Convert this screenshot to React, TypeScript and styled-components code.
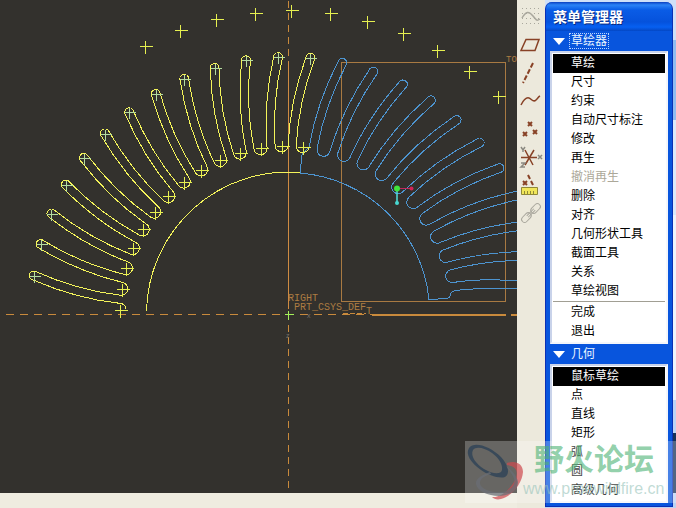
import React from "react";
import styled, { createGlobalStyle } from "styled-components";

const GlobalStyle = createGlobalStyle`
  *, *::before, *::after { box-sizing: border-box; }
  html, body, #root { margin: 0; height: 100%; }
  body {
    overflow: hidden;
    background: #ece9d8;
    font: 12px/19px "Liberation Sans", "Noto Sans CJK SC", sans-serif;
  }
`;

/* ---------- Page layout ---------- */

const Desktop = styled.div`
  position: relative;
  display: flex;
  height: 100vh;
  overflow: hidden;
  background: #ece9d8;
`;

const Workspace = styled.div`
  flex: 1;
  min-width: 0;
  display: flex;
  flex-direction: column;
`;

const Viewport = styled.main`
  flex: 1;
  min-height: 0;
  background: #33312d;
`;

const StatusBar = styled.footer`
  height: 15px;
  background: #efece0;
`;

const Drawing = styled.svg`
  display: block;
  width: 100%;
  height: 100%;
  overflow: hidden;
`;

const Toolbar = styled.nav`
  display: flex;
  flex-direction: column;
  width: 28px;
  padding-top: 2px;
  background: #ece9dc;
`;

const ToolButton = styled.button`
  display: block;
  width: 28px;
  height: 28px;
  padding: 0;
  border: 0;
  background: none;
`;

const Backdrop = styled.div`
  display: flex;
  flex-direction: column;
  padding-right: 3px;
  background: linear-gradient(
    #cfe0f8 0 40px,
    #8fbcf2 40px 120px,
    #dce9fb 120px 215px,
    #eef4fd 215px 400px,
    #bcd4f6 400px 433px,
    #173158 433px 493px,
    #bdd2f3 493px
  );
`;

/* ---------- Menu manager window ---------- */

const MenuWindow = styled.aside`
  display: flex;
  flex-direction: column;
  width: 128px;
  margin: 2px 0;
  padding: 0 4px 3px;
  border: solid #0b2fb5;
  border-width: 0 1px 1px;
  border-radius: 7px 7px 0 0;
  background: #0855dd;
`;

const TitleBar = styled.h1`
  height: 29px;
  margin: 0 -4px;
  padding-left: 7px;
  border-radius: 7px 7px 0 0;
  background: linear-gradient(#0a3fc0, #2b83f6 3px, #0a5ce6 8px, #0552dc 20px, #0660f2 25px, #0447c4);
  color: #fff;
  font-size: 14px;
  font-weight: 700;
  line-height: 30px;
  text-shadow: 1px 1px #0a2a80;
`;

const SectionHeader = styled.button`
  display: flex;
  align-items: center;
  gap: 4px;
  height: 20px;
  padding: 0 0 0 3px;
  border: 0;
  background: none;
  color: #eaf6ff;
  font: inherit;
`;

const SectionLabel = styled.span<{ $focused?: boolean }>`
  height: 16px;
  padding: 0 1px;
  border: 1px dotted ${(p) => (p.$focused ? "#b9d4ff" : "transparent")};
  line-height: 14px;
`;

const MenuList = styled.ul`
  margin: 0;
  padding: 1px;
  border: 2px solid #c9d3ea;
  border-right-color: #f4f6fb;
  border-bottom-color: #f4f6fb;
  background: #fff;
  list-style: none;
`;

const MenuItem = styled.button<{ $active?: boolean }>`
  display: block;
  width: 100%;
  height: 19px;
  padding: 0 0 0 18px;
  border: 0;
  background: ${(p) => (p.$active ? "#000" : "none")};
  color: ${(p) => (p.$active ? "#fff" : "#000")};
  font: inherit;
  text-align: left;
  white-space: nowrap;

  &:disabled { color: #aca899; }
`;

const Separator = styled.li`
  height: 2px;
  border-top: 1px solid #a19f94;
`;

/* ---------- Forum watermark ---------- */

const Watermark = styled.div`
  position: absolute;
  right: 0;
  bottom: 5px;
  display: flex;
  width: 211px;
  height: 62px;
  background: rgba(255, 255, 255, 0.26);
  pointer-events: none;
`;

const WatermarkText = styled.div`
  display: flex;
  flex-direction: column;
  margin-left: -2px;
  white-space: nowrap;
`;

const WatermarkName = styled.span`
  padding-left: 11px;
  color: rgba(76, 178, 116, 0.62);
  font-size: 30px;
  font-weight: 700;
  line-height: 38px;
`;

const WatermarkUrl = styled.span`
  color: rgba(150, 195, 185, 0.6);
  font-size: 16px;
  line-height: 20px;
`;

/* ---------- Sketch geometry ---------- */

const CX = 288;
const CY = 314;
const STEP = 7.2;
const TIP_R = 257;
const ROOT_R = 168;

const YELLOW = "#f4f45a";
const BLUE = "#4d94cf";
const ORANGE = "#c98a3c";

type Point = [number, number];

// Polar position plus a tangential offset (positive is counter-clockwise).
const polar = (r: number, deg: number, side = 0): Point => {
  const a = (deg * Math.PI) / 180;
  return [CX + r * Math.cos(a) - side * Math.sin(a), CY - r * Math.sin(a) - side * Math.cos(a)];
};

const fmt = ([x, y]: Point) => `${x.toFixed(1)} ${y.toFixed(1)}`;

const edge = (deg: number, side: 1 | -1) => {
  const root = side > 0 ? polar(ROOT_R, deg + STEP, -6.5) : polar(ROOT_R, deg, 6.5);
  const tip = polar(TIP_R, deg, side * 4.5);
  const push = polar(0, deg + 2, 7);
  const control: Point = [
    (root[0] + tip[0]) / 2 + push[0] - CX,
    (root[1] + tip[1]) / 2 + push[1] - CY,
  ];
  return { root, tip, control };
};

const toothPath = (deg: number) => {
  const ccw = edge(deg, 1);
  const cw = edge(deg, -1);
  const next = polar(ROOT_R, deg, -6.5);
  return (
    `M${fmt(ccw.root)}Q${fmt(ccw.control)} ${fmt(ccw.tip)}` +
    `A4.5 4.5 0 0 1 ${fmt(cw.tip)}Q${fmt(cw.control)} ${fmt(cw.root)}` +
    `A6.5 6.5 0 0 0 ${fmt(next)}`
  );
};

const angles = (from: number, count: number, dir: number) =>
  Array.from({ length: count }, (_, i) => from + dir * i * STEP);

const yellowTeeth = angles(85, 13, 1);
const blueTeeth = angles(77.8, 10, -1);
const yellowRoots = angles(85, 14, 1);

const outerMarks: Point[] = [
  [145, 46], [180, 30], [216, 19], [255, 13], [291, 10], [330, 13],
  [367, 21], [403, 33], [437, 50], [469, 71], [498, 96],
];

const cross = ([x, y]: Point, s = 6) => {
  const px = Math.round(x);
  const py = Math.round(y);
  return `M${px - s} ${py}h${2 * s + 1}M${px} ${py - s}v${2 * s + 1}`;
};

const SketchView = () => (
  <Drawing role="img" aria-label="Sketch" fill="none" strokeWidth="1">
    <g stroke={ORANGE} transform="translate(.5 .5)" shapeRendering="crispEdges">
      <path d="M5 314H372" strokeDasharray="8 6" />
      <path d="M288 0V490" strokeDasharray="7 5" />
      <path d="M288 61V308" stroke="#d08c42" />
      <path d="M341 62H505V301H341Z" stroke="#a97a42" />
      <path d="M371 314H505M510 314H517" strokeWidth="2" />
      <path d="M342 313H365" strokeDasharray="5 2" />
    </g>

    <g stroke={BLUE} shapeRendering="crispEdges">
      {blueTeeth.map((a) => (
        <path key={a} d={toothPath(a)} />
      ))}
      <path d={`M${fmt(polar(ROOT_R, 13, -6.5))}Q484 277 545 283`} />
      <path d={`M${fmt(polar(ROOT_R, 85, -6.5))}Q303 153 302 155L300 173A141 141 0 0 1 429 299.500L447 298.500Q451 297 451 293Q454 290 460 290Q490 287 517 289`} />
    </g>

    <g stroke={YELLOW} shapeRendering="crispEdges">
      {yellowTeeth.map((a) => (
        <path key={a} d={toothPath(a)} />
      ))}
      <path d="M119 303Q126 304 126 309" />
      <path d="M146.500 311A142 142 0 0 1 300 172.500" />
      <g transform="translate(.5 .5)" stroke="#e6f050">
        {outerMarks.map((p) => (
          <path key={p[0]} d={cross(p)} />
        ))}
        {yellowTeeth.map((a) => (
          <path key={a} d={cross(polar(TIP_R, a), 5)} stroke="#b4dca0" />
        ))}
        {yellowRoots.map((a) => (
          <path key={a} d={cross(polar(ROOT_R, a))} />
        ))}
        <path d={cross([288, 314], 4)} stroke="#a4f05a" />
      </g>
    </g>

    <g stroke="none">
      <path d="M397 189V203" stroke="#55e0dc" strokeWidth="1.500" />
      <path d="M397 188.500H411" stroke="#c2285c" />
      <circle cx="397" cy="188.500" r="3" fill="#3fe43c" />
      <circle cx="397" cy="203" r="2" fill="#48d8d0" />
      <circle cx="411.500" cy="188.500" r="2" fill="#d02458" />
    </g>

    <g fill="#ad7c42" fontFamily="Liberation Mono, monospace" fontSize="10">
      <text x="288" y="301">RIGHT</text>
      <text x="294" y="310">PRT_CSYS_DEF</text>
      <text x="366" y="314">T</text>
      <text x="506" y="62" fontSize="9">TO</text>
    </g>
    <g fill="#77726a" fontFamily="Liberation Sans, sans-serif" fontSize="7">
      <text x="307" y="318">x</text>
      <text x="286" y="338">z</text>
    </g>
  </Drawing>
);

/* ---------- Toolbar icons ---------- */

const BROWN = "#884226";

const tools: { label: string; icon: React.ReactNode }[] = [
  {
    label: "Sketch",
    icon: (
      <g stroke="#a9a79d">
        <path d="M5 6.500h19M5 11.500h19M5 16.500h19M5 21.500h19" strokeDasharray="1 3" strokeWidth="1" />
        <path d="M5 16C9 9 12 9 16 14S20 19 23 17" />
      </g>
    ),
  },
  { label: "Plane", icon: <path d="M9 9.500H22L18 20.500H4Z" stroke={BROWN} /> },
  { label: "Axis", icon: <path d="M16 5L6 25" stroke={BROWN} strokeWidth="2" strokeDasharray="5 2" /> },
  { label: "Curve", icon: <path d="M4 19C7 13 9 11 12 12S16 17 19 14S21 11 23 10" stroke={BROWN} /> },
  {
    label: "Point",
    icon: <path d="M11 8l4 4m0-4l-4 4M6 18l4 4m0-4l-4 4M16 16l4 4m0-4l-4 4" stroke={BROWN} strokeWidth="2" />,
  },
  {
    label: "Coordinate system",
    icon: (
      <>
        <path d="M4 15.500H20M8 8l8 15M17 8L8 23" stroke={BROWN} />
        <path d="M4 5l2 3l2-3M6 8v2M21 13l4 4m0-4l-4 4M4 21h4l-4 4h4" stroke="#8b8981" />
      </>
    ),
  },
  {
    label: "Measure",
    icon: (
      <>
        <path d="M6 11l4 4m0-4l-4 4M11 5l2 4M14 11l2 4" stroke={BROWN} strokeWidth="2" />
        <path d="M4.500 17.500h16v7h-16z" fill="#f0e65a" stroke="#8f8838" strokeWidth="1" />
        <path d="M7.500 24v-3m3 3v-3m3 3v-3m3 3v-3" stroke="#8f8838" strokeWidth="1" />
      </>
    ),
  },
  {
    label: "Link",
    icon: (
      <g stroke="#aaa89e" strokeWidth="1" transform="rotate(-45 14 15)">
        <rect x="2" y="12" width="11" height="6" rx="3" />
        <rect x="15" y="12" width="11" height="6" rx="3" />
        <path d="M9 14h10M9 16h10" />
      </g>
    ),
  },
];

/* ---------- Menu data ---------- */

type Entry = { label: string; active?: boolean; disabled?: boolean; ruleAbove?: boolean };

const sections: { title: string; focused?: boolean; items: Entry[] }[] = [
  {
    title: "草绘器",
    focused: true,
    items: [
      { label: "草绘", active: true },
      { label: "尺寸" },
      { label: "约束" },
      { label: "自动尺寸标注" },
      { label: "修改" },
      { label: "再生" },
      { label: "撤消再生", disabled: true },
      { label: "删除" },
      { label: "对齐" },
      { label: "几何形状工具" },
      { label: "截面工具" },
      { label: "关系" },
      { label: "草绘视图" },
      { label: "完成", ruleAbove: true },
      { label: "退出" },
    ],
  },
  {
    title: "几何",
    items: [
      { label: "鼠标草绘", active: true },
      { label: "点" },
      { label: "直线" },
      { label: "矩形" },
      { label: "弧" },
      { label: "圆" },
      { label: "高级几何" },
    ],
  },
];

export default function App() {
  return (
    <>
      <GlobalStyle />
      <Desktop>
        <Workspace>
          <Viewport>
            <SketchView />
          </Viewport>
          <StatusBar />
        </Workspace>

        <Toolbar aria-label="Datum tools">
          {tools.map((tool) => (
            <ToolButton key={tool.label} type="button" aria-label={tool.label}>
              <svg width="28" height="28" fill="none" strokeWidth="1.500" aria-hidden="true">
                {tool.icon}
              </svg>
            </ToolButton>
          ))}
        </Toolbar>

        <Backdrop>
          <MenuWindow>
            <TitleBar>菜单管理器</TitleBar>
            {sections.map((section) => (
              <React.Fragment key={section.title}>
                <SectionHeader type="button" aria-expanded="true">
                  <svg width="12" height="7" aria-hidden="true">
                    <path d="M0 0H12L6 7Z" fill="#fff" />
                  </svg>
                  <SectionLabel $focused={section.focused}>{section.title}</SectionLabel>
                </SectionHeader>
                <MenuList>
                  {section.items.map((item) => (
                    <React.Fragment key={item.label}>
                      {item.ruleAbove && <Separator role="separator" />}
                      <li>
                        <MenuItem type="button" $active={item.active} disabled={item.disabled}>
                          {item.label}
                        </MenuItem>
                      </li>
                    </React.Fragment>
                  ))}
                </MenuList>
              </React.Fragment>
            ))}
          </MenuWindow>
        </Backdrop>

        <Watermark>
          <svg width="60" height="62" fill="none" aria-hidden="true">
            <path
              fillRule="evenodd"
              fill="rgba(42,64,86,.75)"
              d="M4 7C9 0 25 5 36 16C44 25 45 33 40 36C34 38 23 34 16 29C6 22 0 13 4 7ZM8 9C5 15 11 23 19 28C27 33 36 34 37 29C38 24 34 17 27 12C20 7 11 5 8 9Z"
            />
            <path
              fill="rgba(205,72,78,.7)"
              d="M42 22C50 19 58 22 58 31C57 43 47 55 36 58C32 59 29 58 27 56C35 57 45 49 50 39C54 30 51 25 42 24Z"
            />
            <path
              fill="rgba(105,110,116,.75)"
              d="M25 31C17 34 10 38 11 43C12 50 23 55 34 55C45 55 53 49 53 41C52 35 47 29 41 25C45 31 51 37 49 43C46 50 37 52 30 51C21 50 15 46 15 42C15 38 19 35 26 33Z"
            />
          </svg>
          <WatermarkText>
            <WatermarkName>野火论坛</WatermarkName>
            <WatermarkUrl>www.proewildfire.cn</WatermarkUrl>
          </WatermarkText>
        </Watermark>
      </Desktop>
    </>
  );
}
